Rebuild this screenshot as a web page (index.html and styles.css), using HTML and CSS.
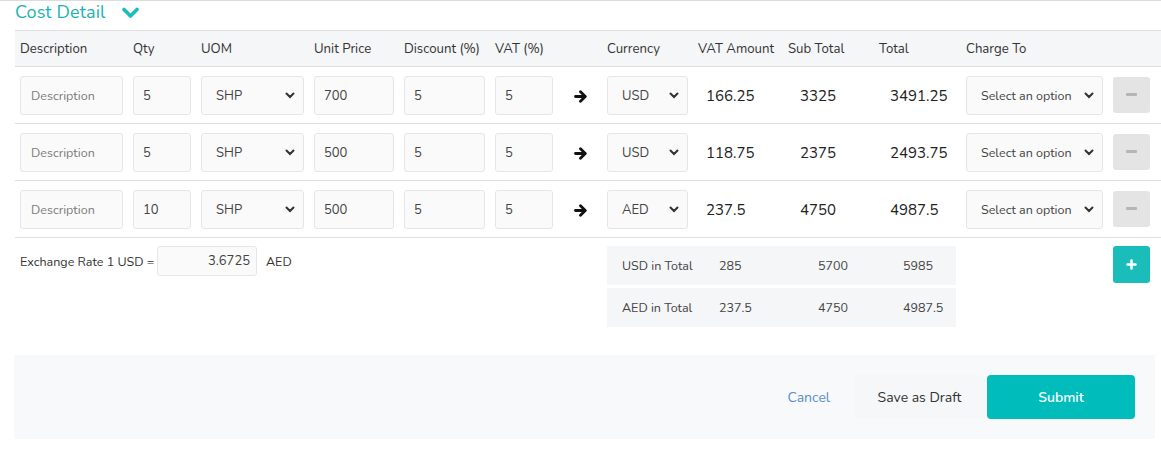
FILE: index.html
```html
<!DOCTYPE html>
<html>
<head>
<meta charset="utf-8">
<link rel="stylesheet" href="styles.css">
</head>
<body>
<div class="page">
  <div class="title-bar">
    <span class="title">Cost Detail</span>
    <svg class="title-chev" width="17" height="12" viewBox="0 0 17 12"><path d="M2 2.5 L8.5 9 L15 2.5" fill="none" stroke="#1bbdbb" stroke-width="3.6" stroke-linecap="round" stroke-linejoin="round"/></svg>
  </div>

  <div class="table">
    <div class="row head">
      <div>Description</div><div>Qty</div><div>UOM</div><div>Unit Price</div><div>Discount (%)</div><div>VAT (%)</div><div></div><div>Currency</div><div>VAT Amount</div><div>Sub Total</div><div>Total</div><div>Charge To</div><div></div>
    </div>

    <div class="row body">
      <div class="field ph">Description</div>
      <div class="field">5</div>
      <div class="field sel"><span>SHP</span><svg width="10" height="7" viewBox="0 0 10 7"><path d="M1.5 1.5 L5 5 L8.5 1.5" fill="none" stroke="#333" stroke-width="2" stroke-linecap="round"/></svg></div>
      <div class="field">700</div>
      <div class="field">5</div>
      <div class="field">5</div>
      <div class="arrow"><svg width="14" height="13" viewBox="0 0 14 13"><path d="M1.5 6.5 H11 M6.5 1.8 L11.3 6.5 L6.5 11.2" fill="none" stroke="#111" stroke-width="2.8" stroke-linecap="round" stroke-linejoin="round"/></svg></div>
      <div class="field sel"><span>USD</span><svg width="10" height="7" viewBox="0 0 10 7"><path d="M1.5 1.5 L5 5 L8.5 1.5" fill="none" stroke="#333" stroke-width="2" stroke-linecap="round"/></svg></div>
      <div class="val v1">166.25</div>
      <div class="val v2">3325</div>
      <div class="val v3">3491.25</div>
      <div class="field sel charge"><span>Select an option</span><svg width="10" height="7" viewBox="0 0 10 7"><path d="M1.5 1.5 L5 5 L8.5 1.5" fill="none" stroke="#333" stroke-width="2" stroke-linecap="round"/></svg></div>
      <div class="minus"><span></span></div>
    </div>

    <div class="row body">
      <div class="field ph">Description</div>
      <div class="field">5</div>
      <div class="field sel"><span>SHP</span><svg width="10" height="7" viewBox="0 0 10 7"><path d="M1.5 1.5 L5 5 L8.5 1.5" fill="none" stroke="#333" stroke-width="2" stroke-linecap="round"/></svg></div>
      <div class="field">500</div>
      <div class="field">5</div>
      <div class="field">5</div>
      <div class="arrow"><svg width="14" height="13" viewBox="0 0 14 13"><path d="M1.5 6.5 H11 M6.5 1.8 L11.3 6.5 L6.5 11.2" fill="none" stroke="#111" stroke-width="2.8" stroke-linecap="round" stroke-linejoin="round"/></svg></div>
      <div class="field sel"><span>USD</span><svg width="10" height="7" viewBox="0 0 10 7"><path d="M1.5 1.5 L5 5 L8.5 1.5" fill="none" stroke="#333" stroke-width="2" stroke-linecap="round"/></svg></div>
      <div class="val v1">118.75</div>
      <div class="val v2">2375</div>
      <div class="val v3">2493.75</div>
      <div class="field sel charge"><span>Select an option</span><svg width="10" height="7" viewBox="0 0 10 7"><path d="M1.5 1.5 L5 5 L8.5 1.5" fill="none" stroke="#333" stroke-width="2" stroke-linecap="round"/></svg></div>
      <div class="minus"><span></span></div>
    </div>

    <div class="row body">
      <div class="field ph">Description</div>
      <div class="field">10</div>
      <div class="field sel"><span>SHP</span><svg width="10" height="7" viewBox="0 0 10 7"><path d="M1.5 1.5 L5 5 L8.5 1.5" fill="none" stroke="#333" stroke-width="2" stroke-linecap="round"/></svg></div>
      <div class="field">500</div>
      <div class="field">5</div>
      <div class="field">5</div>
      <div class="arrow"><svg width="14" height="13" viewBox="0 0 14 13"><path d="M1.5 6.5 H11 M6.5 1.8 L11.3 6.5 L6.5 11.2" fill="none" stroke="#111" stroke-width="2.8" stroke-linecap="round" stroke-linejoin="round"/></svg></div>
      <div class="field sel"><span>AED</span><svg width="10" height="7" viewBox="0 0 10 7"><path d="M1.5 1.5 L5 5 L8.5 1.5" fill="none" stroke="#333" stroke-width="2" stroke-linecap="round"/></svg></div>
      <div class="val v1">237.5</div>
      <div class="val v2">4750</div>
      <div class="val v3">4987.5</div>
      <div class="field sel charge"><span>Select an option</span><svg width="10" height="7" viewBox="0 0 10 7"><path d="M1.5 1.5 L5 5 L8.5 1.5" fill="none" stroke="#333" stroke-width="2" stroke-linecap="round"/></svg></div>
      <div class="minus"><span></span></div>
    </div>
  </div>

  <div class="summary">
    <div class="rate">
      <span class="rate-label">Exchange Rate 1 USD =</span>
      <div class="rate-input">3.6725</div>
      <span class="rate-cur">AED</span>
    </div>
    <div class="totals">
      <div class="trow"><span class="tl">USD in Total</span><span class="t1">285</span><span class="t2">5700</span><span class="t3">5985</span></div>
      <div class="trow"><span class="tl">AED in Total</span><span class="t1">237.5</span><span class="t2">4750</span><span class="t3">4987.5</span></div>
    </div>
    <div class="plus">
      <svg width="11" height="11" viewBox="0 0 11 11"><path d="M5.5 1.5 V9.5 M1.5 5.5 H9.5" stroke="#fff" stroke-width="2.5" stroke-linecap="round"/></svg>
    </div>
  </div>

  <div class="footer">
    <button class="btn cancel">Cancel</button>
    <button class="btn draft">Save as Draft</button>
    <button class="btn submit">Submit</button>
  </div>
</div>
</body>
</html>
```

FILE: styles.css
```css
* { box-sizing: border-box; }
html, body { margin: 0; padding: 0; background: #fff; }
body {
  font-family: "Nunito", "Lato", "Open Sans", sans-serif;
  color: #333;
  width: 1161px;
  height: 458px;
  overflow: hidden;
}
.page {
  border-top: 1px solid #dcdcdc;
  padding-left: 15px;
}
.title-bar {
  display: flex;
  align-items: center;
  height: 29px;
  padding-bottom: 7px;
  gap: 17px;
}
.title {
  color: #1bb3b0;
  font-size: 18px;
  letter-spacing: 0.1px;
}
.title-chev { margin-top: 1px; }

.table { width: 1146px; }
.row {
  display: grid;
  grid-template-columns: 103px 58px 103px 80px 81px 58px 34px 81px 80px 81px 77px 137px 37px;
  column-gap: 10px;
  padding-left: 5px;
  align-items: center;
  border-bottom: 1px solid #dedede;
}
.row.head {
  background: #f5f6f8;
  border-top: 1px solid #dedede;
  height: 37px;
  font-size: 13.2px;
  color: #333;
}
.row.body {
  height: 57px;
}
.field {
  height: 39px;
  border: 1px solid #e6e6e6;
  border-radius: 3px;
  background: #fafafa;
  display: flex;
  align-items: center;
  padding-left: 9px;
  font-size: 13px;
  color: #444;
  margin-top: 1px;
}
.field.ph { padding-left: 10px; color: #7a7a7a; font-size: 12.5px; }
.field.sel {
  padding-left: 14px;
  padding-right: 8px;
  justify-content: space-between;
}
.field.charge { font-size: 12.5px; color: #444; }
.arrow { display: flex; justify-content: center; padding-left: 2px; margin-top: 2px; }
.val { font-size: 15px; color: #222; margin-top: 1px; }
.v1 { padding-left: 8px; }
.v2 { padding-left: 12px; }
.v3 { padding-left: 11px; }
.minus {
  width: 37px;
  height: 36px;
  background: #e4e4e4;
  border-radius: 3px;
  display: flex;
  align-items: center;
  justify-content: center;
  margin-top: -1px;
}
.minus span {
  width: 11px;
  height: 3px;
  background: #b5b5b5;
  border-radius: 1px;
}

.summary {
  display: flex;
  align-items: flex-start;
  padding-top: 8px;
  height: 117px;
}
.rate {
  display: flex;
  align-items: center;
  padding-left: 5px;
  width: 592px;
  font-size: 12.5px;
  color: #333;
}
.rate-label { width: 137px; }
.rate-input {
  width: 100px;
  height: 30px;
  border: 1px solid #e6e6e6;
  border-radius: 3px;
  background: #fafafa;
  display: flex;
  align-items: center;
  justify-content: flex-end;
  padding-right: 6px;
  font-size: 13px;
  color: #444;
}
.rate-cur { margin-left: 9px; }
.totals {
  width: 349px;
  display: flex;
  flex-direction: column;
  gap: 3px;
}
.trow {
  display: flex;
  align-items: center;
  height: 39px;
  background: #f5f6f8;
  font-size: 12.5px;
  color: #444;
  padding-left: 15px;
}
.tl { width: 97px; }
.t1 { width: 99px; }
.t2 { width: 85px; }
.plus {
  margin-left: 157px;
  width: 37px;
  height: 37px;
  background: #1bbdbb;
  border-radius: 3px;
  display: flex;
  align-items: center;
  justify-content: center;
}

.footer {
  width: 1141px;
  height: 84px;
  background: #f8f9fa;
  display: flex;
  align-items: center;
  justify-content: flex-end;
  padding-right: 20px;
  margin-left: -1px;
}
.btn {
  font-family: inherit;
  border: none;
  height: 44px;
  font-size: 14px;
  border-radius: 4px;
  cursor: pointer;
}
.cancel {
  background: transparent;
  color: #5b8ecb;
  padding: 0 24px 0 0;
}
.draft {
  background: #f6f7f8;
  color: #333;
  width: 131px;
  margin-right: 2px;
}
.submit {
  background: #00bdbb;
  color: #fff;
  width: 148px;
  font-weight: 600;
}
```
